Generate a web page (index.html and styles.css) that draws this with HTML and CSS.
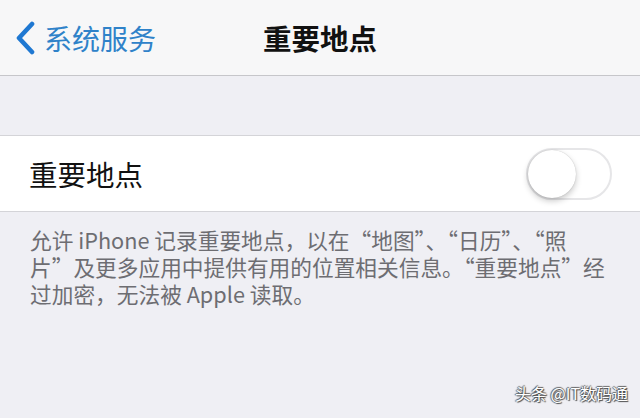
FILE: index.html
```html
<!DOCTYPE html>
<html lang="zh-CN">
<head>
<meta charset="utf-8">
<title>重要地点</title>
<link rel="stylesheet" href="styles.css">
</head>
<body>
<div class="screen">
  <header class="nav">
    <a class="back">
      <svg class="chev" width="22" height="34" viewBox="0 0 22 34"><path d="M18 3 L5 17 L18 31" fill="none" stroke="#1f78d2" stroke-width="4.6" stroke-linecap="round" stroke-linejoin="round"/></svg>
      <span class="back-text">系统服务</span>
    </a>
    <h1 class="title">重要地点</h1>
    <span class="spacer"></span>
  </header>
  <div class="gap"></div>
  <div class="row">
    <span class="label">重要地点</span>
    <span class="switch"><span class="knob"></span></span>
  </div>
  <div class="footer">
    <div class="line">允许 iPhone 记录重要地点，以在“地图”、“日历”、“照</div>
    <div class="line">片”及更多应用中提供有用的位置相关信息。“重要地点”经</div>
    <div class="line">过加密，无法被 Apple 读取。</div>
  </div>
  <div class="watermark">头条 @IT数码通</div>
</div>
</body>
</html>
```
FILE: styles.css
```css
html, body {
  margin: 0;
  padding: 0;
}
body {
  width: 640px;
  height: 418px;
  overflow: hidden;
  background: #efeff4;
  font-family: "Noto Sans CJK SC", "Noto Sans", sans-serif;
}
.screen {
  position: relative;
  width: 640px;
  height: 418px;
}
.nav {
  height: 75px;
  background: #f7f7f8;
  border-bottom: 1px solid #c6c6ca;
  display: grid;
  grid-template-columns: 1fr auto 1fr;
  align-items: center;
}
.back {
  display: flex;
  align-items: center;
  padding-left: 14px;
  gap: 8px;
  color: #2f82c9;
}
.chev {
  display: block;
}
.back-text {
  font-size: 28px;
  line-height: 34px;
}
.title {
  margin: 0;
  font-size: 28.5px;
  font-weight: 600;
  line-height: 34px;
  color: #111;
}
.gap {
  height: 59px;
}
.row {
  height: 75px;
  background: #fff;
  border-top: 1px solid #d4d4d8;
  border-bottom: 1px solid #d4d4d8;
  display: flex;
  align-items: center;
  justify-content: space-between;
  padding: 0 28px 0 29px;
}
.label {
  font-size: 28.5px;
  color: #111;
}
.switch {
  position: relative;
  width: 82px;
  height: 48px;
  border: 2px solid #e6e6e8;
  border-radius: 26px;
  background: #fff;
}
.knob {
  position: absolute;
  left: 0;
  top: 0;
  width: 48px;
  height: 48px;
  border-radius: 50%;
  background: #fff;
  box-shadow: 0 3px 6px rgba(0,0,0,0.22), 0 0 1px rgba(0,0,0,0.25);
}
.footer {
  padding: 14px 30px 0 30px;
  font-size: 21.7px;
  color: #6d6d72;
  white-space: nowrap;
}
.line {
  height: 27px;
  line-height: 27px;
}
.watermark {
  position: absolute;
  right: 12px;
  bottom: 13px;
  font-size: 16px;
  color: #fff;
  text-shadow: 1px 1px 1px #444, -1px 0 1px #555, 0 -1px 1px #666;
}
```
